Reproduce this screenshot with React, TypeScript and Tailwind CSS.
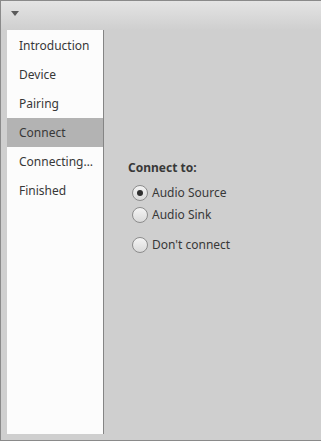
const steps = ["Introduction", "Device", "Pairing", "Connect", "Connecting…", "Finished"];
const active = "Connect";

const options = [
  { label: "Audio Source", checked: true, gap: "mt-[7px]" },
  { label: "Audio Sink", checked: false, gap: "mt-[4px]" },
  { label: "Don't connect", checked: false, gap: "mt-[12px]" }
];

function Radio({ checked }: { checked: boolean }) {
  return (
    <span className="flex h-[16px] w-[16px] items-center justify-center rounded-full border border-[#8c8c8c] bg-gradient-to-b from-[#f4f4f4] to-[#dadada]">
      {checked && <span className="h-[6px] w-[6px] rounded-full bg-[#2e2e2e]" />}
    </span>
  );
}

export default function App() {
  return (
    <div className="flex h-[441px] w-[321px] flex-col border-b border-l border-t border-[#8a8a8a] bg-[#cfcfcf] font-['Noto_Sans',sans-serif] text-[12px] text-[#383838]">
      <div className="flex h-[29px] shrink-0 items-start bg-gradient-to-b from-[#e4e4e4] to-[#cfcfcf] pl-[10px] pt-[10px]">
        <svg width="8" height="5" viewBox="0 0 8 5">
          <path d="M0 0 H8 L4 5 Z" fill="#5a5a5a" />
        </svg>
      </div>
      <div className="flex flex-1 pb-[6px] pl-[6px]">
        <ul className="w-[97px] border-r border-[#858585] bg-[#fcfcfc] pt-[1px]">
          {steps.map((step) => (
            <li
              key={step}
              className={`flex h-[29px] items-center pl-[12px] ${step === active ? "bg-[#b3b3b3]" : ""}`}
            >
              {step}
            </li>
          ))}
        </ul>
        <div className="flex flex-col pl-[24px] pt-[129px]">
          <p className="font-bold leading-[18px]">Connect to:</p>
          {options.map((opt) => (
            <label key={opt.label} className={`flex h-[18px] items-center gap-[4px] pl-[4px] ${opt.gap}`}>
              <Radio checked={opt.checked} />
              <span>{opt.label}</span>
            </label>
          ))}
        </div>
      </div>
    </div>
  );
}
